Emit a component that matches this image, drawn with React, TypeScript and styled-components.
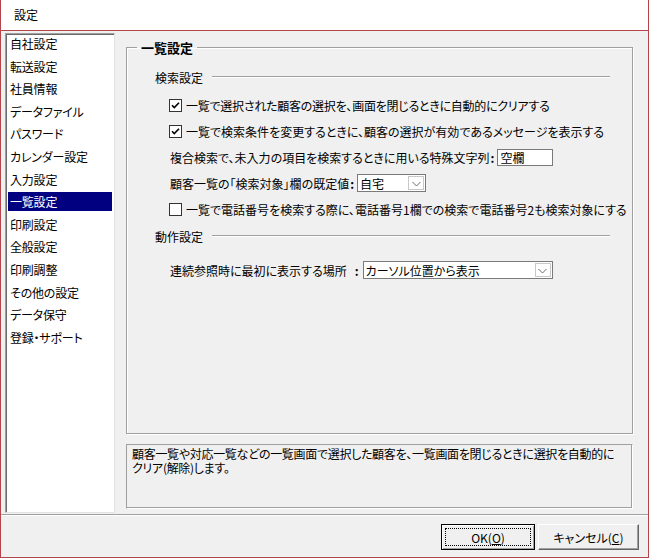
import React from 'react';
import styled, { createGlobalStyle } from 'styled-components';

const GlobalStyle = createGlobalStyle`
  html, body {
    margin: 0;
    padding: 0;
    background: #ffffff;
  }
  body {
    font-family: 'Noto Sans CJK JP', 'Noto Sans', sans-serif;
    font-size: 12px;
    color: #000;
    font-feature-settings: 'palt';
  }
  * {
    box-sizing: border-box;
  }
`;

const MENU = [
  '自社設定',
  '転送設定',
  '社員情報',
  'データファイル',
  'パスワード',
  'カレンダー設定',
  '入力設定',
  '一覧設定',
  '印刷設定',
  '全般設定',
  '印刷調整',
  'その他の設定',
  'データ保守',
  '登録・サポート',
];

const CheckBox = ({ checked }: { checked: boolean }) => (
  <Box>
    {checked && (
      <svg width="11" height="11" viewBox="0 0 11 11">
        <path d="M2 5.2 L4.3 7.6 L9 2.8" fill="none" stroke="#000" strokeWidth="1.6" />
      </svg>
    )}
  </Box>
);

const Select = ({ value, width }: { value: string; width: number }) => (
  <SelectBox style={{ width }}>
    <span>{value}</span>
    <Arrow>
      <svg width="9" height="6" viewBox="0 0 9 6">
        <path d="M0.5 1 L4.5 5 L8.5 1" fill="none" stroke="#6a6a6a" strokeWidth="1" />
      </svg>
    </Arrow>
  </SelectBox>
);

const App = () => {
  const selected = '一覧設定';

  return (
    <>
      <GlobalStyle />
      <Window>
        <TitleBar>設定</TitleBar>
        <Body>
          <Main>
            <List>
              {MENU.map((m) => (
                <ListItem key={m} chosen={m === selected}>
                  {m}
                </ListItem>
              ))}
            </List>
            <RightCol>
              <Group>
                <legend>一覧設定</legend>
                <SectionHead>
                  <span>検索設定</span>
                  <Rule />
                </SectionHead>
                <Rows>
                  <Row indent={14}>
                    <CheckBox checked />
                    <Tight>一覧で選択された顧客の選択を、画面を閉じるときに自動的にクリアする</Tight>
                  </Row>
                  <Row indent={14}>
                    <CheckBox checked />
                    一覧で検索条件を変更するときに、顧客の選択が有効であるメッセージを表示する
                  </Row>
                  <Row indent={15}>
                    複合検索で、未入力の項目を検索するときに用いる特殊文字列<Colon>:</Colon>
                    <TextInput>空欄</TextInput>
                  </Row>
                  <Row indent={15}>
                    顧客一覧の「検索対象」欄の既定値<Colon>:</Colon>
                    <Select value="自宅" width={69} />
                  </Row>
                  <Row indent={14}>
                    <CheckBox checked={false} />
                    一覧で電話番号を検索する際に、電話番号1欄での検索で電話番号2も検索対象にする
                  </Row>
                </Rows>
                <SectionHead top={6}>
                  <span>動作設定</span>
                  <Rule />
                </SectionHead>
                <Rows top={13}>
                  <Row indent={15}>
                    連続参照時に最初に表示する場所<Colon wide>:</Colon>
                    <Select value="カーソル位置から表示" width={190} />
                  </Row>
                </Rows>
              </Group>
              <Description>
                顧客一覧や対応一覧などの一覧画面で選択した顧客を、一覧画面を閉じるときに選択を自動的にクリア(解除)します。
              </Description>
            </RightCol>
          </Main>
          <Footer>
            <Button primary style={{ width: 94 }}>
              OK(<u>O</u>)
            </Button>
            <Button style={{ width: 101 }}>
              キャンセル(<u>C</u>)
            </Button>
          </Footer>
        </Body>
      </Window>
    </>
  );
};

export default App;

const Window = styled.div`
  width: 649px;
  height: 558px;
  display: flex;
  flex-direction: column;
  border: 1px solid #b4464b;
  border-top: none;
  background: #f0f0f0;
`;

const TitleBar = styled.div`
  height: 31px;
  flex-shrink: 0;
  display: flex;
  align-items: center;
  padding-left: 13px;
  padding-bottom: 1px;
  background: #ffffff;
  border-bottom: 1px solid #b4464b;
  font-size: 12px;
`;

const Body = styled.div`
  flex: 1;
  display: flex;
  flex-direction: column;
  background: #f0f0f0;
`;

const Main = styled.div`
  flex: 1;
  display: flex;
  flex-direction: row;
  gap: 11px;
  padding: 2px 15px 1px 4px;
  min-height: 0;
`;

const List = styled.div`
  width: 110px;
  flex-shrink: 0;
  height: 100%;
  background: #ffffff;
  border: 1px solid #a0a0a0;
  border-right-color: #e3e3e3;
  border-bottom-color: #e3e3e3;
  box-shadow: inset 1px 1px 0 #696969;
  padding: 0 2px 0 2px;
  display: flex;
  flex-direction: column;
  gap: 3.6px;
`;

const ListItem = styled.div<{ chosen: boolean }>`
  height: 19px;
  line-height: 19px;
  padding-left: 2px;
  white-space: nowrap;
  letter-spacing: -0.2px;
  background: ${(p) => (p.chosen ? '#000080' : 'transparent')};
  color: ${(p) => (p.chosen ? '#ffffff' : '#000000')};
`;

const RightCol = styled.div`
  flex: 1;
  display: flex;
  flex-direction: column;
  gap: 10px;
  padding-top: 7px;
  padding-bottom: 4px;
  min-width: 0;
`;

const Group = styled.fieldset`
  flex: 1;
  margin: 0;
  padding: 0 22px 0 28px;
  border: 1px solid #a0a0a0;
  box-shadow: inset 1px 1px 0 #ffffff, 1px 1px 0 #ffffff;
  min-width: 0;

  legend {
    margin-left: -18px;
    padding: 0 4px;
    font-weight: 700;
    font-size: 13px;
    line-height: 15px;
  }
`;

const SectionHead = styled.div<{ top?: number }>`
  display: flex;
  align-items: center;
  gap: 9px;
  height: 16px;
  margin-top: ${(p) => p.top ?? 14}px;
  white-space: nowrap;
`;

const Rule = styled.div`
  flex: 1;
  height: 2px;
  border-top: 1px solid #a0a0a0;
  border-bottom: 1px solid #ffffff;
`;

const Rows = styled.div<{ top?: number }>`
  display: flex;
  flex-direction: column;
  margin-top: ${(p) => p.top ?? 7}px;
`;

const Row = styled.div<{ indent: number }>`
  height: 26px;
  display: flex;
  align-items: center;
  padding-left: ${(p) => p.indent}px;
  white-space: nowrap;
`;

const Tight = styled.span`
  letter-spacing: -0.25px;
`;

const Colon = styled.span<{ wide?: boolean }>`
  font-weight: 700;
  margin-left: ${(p) => (p.wide ? 8 : 1)}px;
  margin-right: ${(p) => (p.wide ? 1 : 0)}px;
`;

const Box = styled.span`
  width: 13px;
  height: 13px;
  flex-shrink: 0;
  margin-right: 4px;
  background: #ffffff;
  border: 1px solid #333333;
  display: inline-flex;
  align-items: center;
  justify-content: center;
`;

const TextInput = styled.span`
  width: 56px;
  height: 17px;
  margin-left: 3px;
  background: #ffffff;
  border: 1px solid #7a7a7a;
  padding-left: 2px;
  line-height: 15px;
`;

const SelectBox = styled.span`
  height: 18px;
  margin-left: 3px;
  background: #ffffff;
  border: 1px solid #7a7a7a;
  display: inline-flex;
  align-items: center;
  justify-content: space-between;
  padding: 0 1px 0 2px;

  span {
    line-height: 15px;
  }
`;

const Arrow = styled.span`
  width: 16px;
  height: 14px;
  border: 1px solid #c8c8c8;
  background: #ffffff;
  display: inline-flex;
  align-items: center;
  justify-content: center;
  padding-top: 2px;
`;

const Description = styled.div`
  height: 65px;
  flex-shrink: 0;
  border: 1px solid #a0a0a0;
  border-right-color: #ffffff;
  border-bottom-color: #ffffff;
  box-shadow: inset -1px -1px 0 #a0a0a0;
  padding: 2px 10px 2px 5px;
  line-height: 14px;
  font-size: 12px;
  letter-spacing: -0.3px;
`;

const Footer = styled.div`
  height: 43px;
  flex-shrink: 0;
  border-top: 1px solid #a0a0a0;
  box-shadow: inset 0 1px 0 #ffffff;
  display: flex;
  justify-content: flex-end;
  align-items: flex-start;
  gap: 3px;
  padding: 9px 9px 0 0;
`;

const Button = styled.button<{ primary?: boolean }>`
  height: 26px;
  font-family: 'Noto Sans CJK JP', 'Noto Sans', sans-serif;
  font-feature-settings: 'palt';
  font-size: 12px;
  color: #000;
  background: #f0f0f0;
  padding: 0;
  border: 1px solid;
  border-color: ${(p) => (p.primary ? '#000 #000 #000 #000' : '#ffffff #646464 #646464 #ffffff')};
  box-shadow: ${(p) =>
    p.primary
      ? 'inset 1px 1px 0 #ffffff, inset -1px -1px 0 #a0a0a0'
      : 'inset -1px -1px 0 #a0a0a0'};
  outline: ${(p) => (p.primary ? '1px dotted #000' : 'none')};
  outline-offset: -5px;
`;
